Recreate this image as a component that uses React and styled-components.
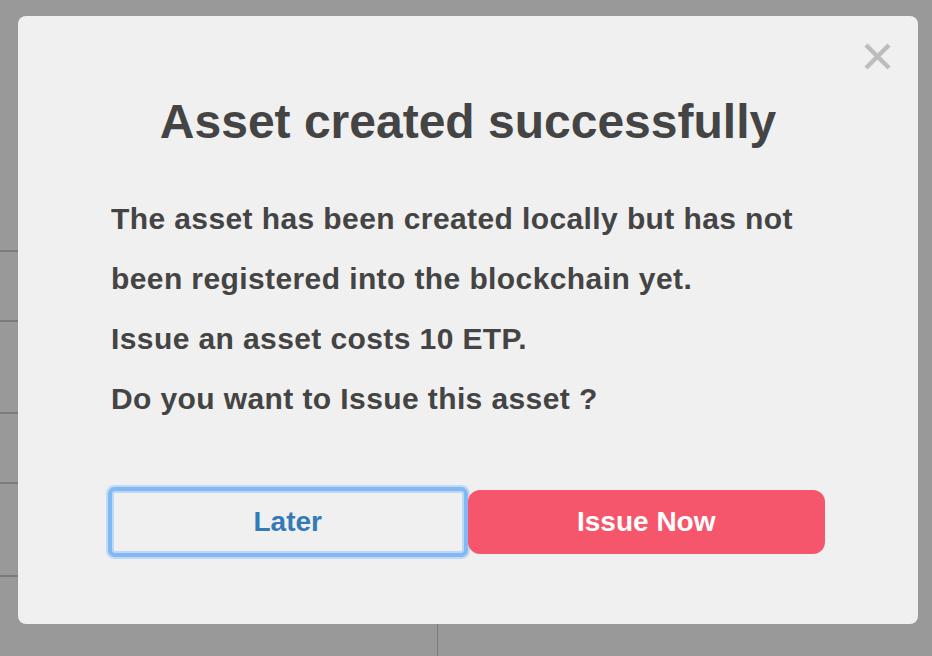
import React from "react";
import styled, { createGlobalStyle } from "styled-components";

const Global = createGlobalStyle`
  html, body { margin: 0; padding: 0; background: #ffffff; overflow: hidden; }
  body { font-family: "Liberation Sans", Arial, Helvetica, sans-serif; }
  #root { height: 656px; }
`;

const Page = styled.div`
  display: flex;
  flex-direction: column;
  width: 880px;
  height: 656px;
  background: #ffffff;
`;

const PageHeader = styled.div`
  height: 250px;
  border-bottom: 2px solid #cdcdcd;
`;

const PageRow = styled.div`
  height: ${(p) => p.h}px;
  border-bottom: 2px solid #cdcdcd;
`;

const PageFooter = styled.div`
  flex: 1;
  display: flex;
`;

const FooterCell = styled.div`
  width: 437px;
  border-right: 1px solid #cdcdcd;
`;

const Overlay = styled.div`
  position: fixed;
  inset: 0;
  background: rgba(0, 0, 0, 0.4);
  padding: 16px 0 0 18px;
  box-sizing: border-box;
`;

const Modal = styled.div`
  position: relative;
  width: 900px;
  box-sizing: border-box;
  background: #f0f0f0;
  border-radius: 8px;
  padding: 78px 93px 70px 93px;
  color: #444444;
`;

const Close = styled.button`
  position: absolute;
  top: 27px;
  right: 27px;
  width: 27px;
  height: 27px;
  padding: 0;
  border: 0;
  background: transparent;
  cursor: pointer;
  display: flex;
`;

const Title = styled.h1`
  margin: 0;
  font-size: 48px;
  line-height: 56px;
  font-weight: 700;
  text-align: center;
`;

const Body = styled.p`
  margin: 39px 0 0;
  font-size: 30px;
  letter-spacing: 0.4px;
  line-height: 60px;
  font-weight: 700;
`;

const ButtonRow = styled.div`
  margin-top: 61px;
  height: 64px;
  display: flex;
  align-items: center;
  gap: 4px;
  padding-left: 1px;
`;

const Button = styled.button`
  font-family: "Liberation Sans", Arial, Helvetica, sans-serif;
  font-size: 28px;
  font-weight: 700;
  box-sizing: border-box;
  display: flex;
  align-items: center;
  justify-content: center;
  cursor: pointer;
  padding: 0;
`;

const LaterButton = styled(Button)`
  width: 352px;
  height: 62px;
  background: #f0f0f0;
  color: #337ab7;
  border: 2px solid #bed8f4;
  border-radius: 3px;
  box-shadow: 0 0 0 4px #80b9f6, 0 0 0 6px rgba(128, 185, 246, 0.4);
`;

const IssueButton = styled(Button)`
  width: 358px;
  height: 64px;
  background: #f6566b;
  color: #ffffff;
  border: 0;
  border-radius: 12px;
`;

export default function App() {
  return (
    <>
      <Global />
      <Page>
        <PageHeader />
        <PageRow h={68} />
        <PageRow h={90} />
        <PageRow h={68} />
        <PageRow h={91} />
        <PageFooter>
          <FooterCell />
        </PageFooter>
      </Page>
      <Overlay>
        <Modal>
          <Close aria-label="Close">
            <svg width="27" height="27" viewBox="0 0 27 27">
              <path d="M2 2 L25 25 M25 2 L2 25" stroke="#bdbdbd" strokeWidth="4.5" fill="none" />
            </svg>
          </Close>
          <Title>Asset created successfully</Title>
          <Body>
            The asset has been created locally but has not been registered into the blockchain yet.
            <br />
            Issue an asset costs 10 ETP.
            <br />
            Do you want to Issue this asset ?
          </Body>
          <ButtonRow>
            <LaterButton>Later</LaterButton>
            <IssueButton>Issue Now</IssueButton>
          </ButtonRow>
        </Modal>
      </Overlay>
    </>
  );
}
